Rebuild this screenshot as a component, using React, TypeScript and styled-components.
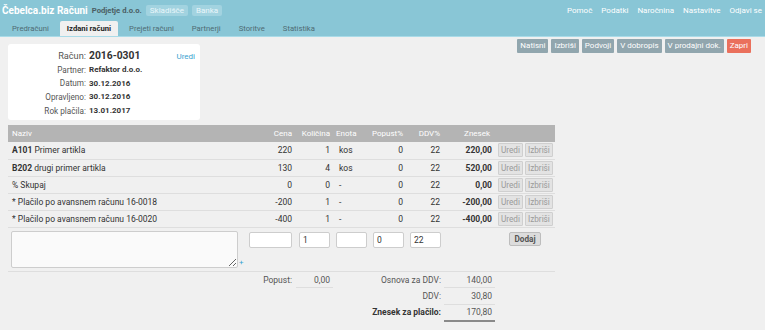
import React from 'react';
import styled, { createGlobalStyle } from 'styled-components';

const Global = createGlobalStyle`
  html, body { margin: 0; padding: 0; background: #f0f0f0; }
  body { font-family: Roboto, "Noto Sans", "Liberation Sans", sans-serif; font-size: 8px; color: #333; }
  * { box-sizing: border-box; }
`;

const Header = styled.header`
  background: #89c6d6;
  border-bottom: 1px solid #a9dbe8;
  height: 37px;
  display: flex;
  flex-direction: column;
`;
const TopBar = styled.div`
  display: flex;
  align-items: center;
  height: 21px;
  padding: 0 2px 0 2px;
`;
const Brand = styled.span`
  color: #fff;
  font-weight: 700;
  font-size: 10px;
  margin-right: 4px;
`;
const Company = styled.span`
  color: #4b5d63;
  font-weight: 700;
  font-size: 7.7px;
  margin-right: 4px;
`;
const Chip = styled.span`
  background: #a2d3e0;
  color: #e9f6fa;
  font-size: 8px;
  height: 11px;
  line-height: 11px;
  padding: 0 4px;
  border-radius: 2px;
  margin-right: 4px;
`;
const RightLinks = styled.nav`
  margin-left: auto;
  display: flex;
  gap: 9px;
  padding-right: 1px;
`;
const TopLink = styled.a`
  color: #fff;
  font-size: 8px;
  text-decoration: none;
`;
const Tabs = styled.nav`
  display: flex;
  height: 15px;
  padding-left: 5px;
  gap: 4px;
`;
const Tab = styled.a<{ $active?: boolean }>`
  display: flex;
  align-items: center;
  padding: 0 7px;
  font-size: 7.7px;
  text-decoration: none;
  color: ${p => (p.$active ? '#222' : '#4f6b73')};
  font-weight: ${p => (p.$active ? 700 : 400)};
  background: ${p => (p.$active ? '#f0f0f0' : 'transparent')};
  border-radius: 2px 2px 0 0;
`;

const Main = styled.main`
  padding: 2px 14px 0 8px;
`;
const TopArea = styled.div`
  display: flex;
  justify-content: space-between;
  align-items: flex-start;
`;
const Card = styled.section`
  margin-top: 5px;
  width: 192px;
  height: 76px;
  background: #fff;
  border-radius: 3px;
  display: flex;
  padding: 5px 5px 0 0;
`;
const InfoGrid = styled.div`
  display: grid;
  grid-template-columns: 78px auto;
  column-gap: 3px;
  align-items: center;
  grid-auto-rows: 13.7px;
`;
const Label = styled.span<{ $big?: boolean }>`
  text-align: right;
  color: #555;
  font-size: ${p => (p.$big ? '9.2px' : '8.2px')};
  white-space: nowrap;
`;
const Value = styled.span<{ $big?: boolean }>`
  font-weight: 700;
  color: #333;
  font-size: ${p => (p.$big ? '10.3px' : '8px')};
  white-space: nowrap;
`;
const EditLink = styled.a`
  margin-left: auto;
  color: #3aa2d0;
  font-size: 8px;
  margin-top: 3px;
`;
const Actions = styled.div`
  display: flex;
  gap: 3px;
`;
const ActionBtn = styled.button<{ $danger?: boolean }>`
  height: 14px;
  padding: 0 3px;
  border: none;
  border-radius: 1px;
  font-family: inherit;
  font-size: 8px;
  color: #fff;
  background: ${p => (p.$danger ? '#ea705c' : '#91a6ae')};
  line-height: 14px;
`;

const Table = styled.table`
  margin-top: 5px;
  width: 547px;
  table-layout: fixed;
  border-collapse: collapse;
`;
const Th = styled.th<{ $align?: string; $pl?: number; $pr?: number }>`
  background: #b4b4b4;
  color: #fff;
  font-weight: 400;
  font-size: 8px;
  height: 17px;
  padding: 0 ${p => p.$pr ?? 0}px 0 ${p => p.$pl ?? 0}px;
  text-align: ${p => p.$align ?? 'left'};
  white-space: nowrap;
`;
const Tr = styled.tr`
  border-bottom: 1px solid #dedede;
`;
const Td = styled.td<{ $align?: string; $pl?: number; $pr?: number; $bold?: boolean }>`
  height: 17px;
  padding: 0 ${p => p.$pr ?? 0}px 0 ${p => p.$pl ?? 0}px;
  text-align: ${p => p.$align ?? 'left'};
  font-weight: ${p => (p.$bold ? 700 : 400)};
  font-size: 8.5px;
  white-space: nowrap;
  color: #333;
`;
const RowBtns = styled.div`
  display: flex;
  gap: 2px;
  padding-left: 3px;
`;
const SmallBtn = styled.button`
  height: 14px;
  padding: 0 2px;
  border: 1px solid #cfcfcf;
  border-radius: 1px;
  background: #e3e3e3;
  color: #9a9a9a;
  font-family: inherit;
  font-size: 8.2px;
  line-height: 12px;
`;
const InputRow = styled.tr`
  border-bottom: 1px solid #dedede;
`;
const InTd = styled.td<{ $pl?: number }>`
  height: 44px;
  vertical-align: top;
  padding: 4px 0 0 ${p => p.$pl ?? 0}px;
`;
const NameCell = styled.div`
  display: flex;
  align-items: flex-end;
  padding: 3px 0 0 3px;
  margin-top: -4px;
`;
const Area = styled.textarea`
  width: 227px;
  height: 37px;
  border: 1px solid #cdcdcd;
  border-radius: 2px;
  background: #fafafa;
  resize: both;
  font-family: inherit;
`;
const Plus = styled.span`
  color: #3aa2d0;
  font-size: 8px;
  line-height: 8px;
  margin-left: 1px;
  margin-bottom: 1px;
`;
const Field = styled.input<{ $w: number }>`
  width: ${p => p.$w}px;
  height: 16px;
  border: 1px solid #cdcdcd;
  border-radius: 2px;
  background: #fff;
  font-family: inherit;
  font-size: 8.5px;
  color: #333;
  padding: 0 3px;
  display: block;
`;
const AddBtn = styled.button`
  display: block;
  margin: 0 auto;
  height: 14px;
  padding: 0 4px;
  border: 1px solid #bdbdbd;
  border-radius: 2px;
  background: #dcdcdc;
  color: #555;
  font-family: inherit;
  font-size: 8.2px;
  font-weight: 700;
  line-height: 12px;
`;
const SumTd = styled.td<{ $align?: string; $pr?: number; $bold?: boolean; $line?: 'thin' | 'thick' | 'none'; $pt?: number }>`
  height: 16.5px;
  padding: ${p => p.$pt ?? 0}px ${p => p.$pr ?? 0}px 0 0;
  text-align: ${p => p.$align ?? 'right'};
  font-weight: ${p => (p.$bold ? 700 : 400)};
  font-size: 8.5px;
  color: ${p => (p.$bold ? '#333' : '#555')};
  white-space: nowrap;
  border-bottom: ${p =>
    p.$line === 'thick' ? '2px solid #8a8a8a' : p.$line === 'thin' ? '1px solid #dedede' : 'none'};
`;

type Item = { code?: string; name: string; price: string; qty: string; unit: string; disc: string; vat: string; total: string };
const items: Item[] = [
  { code: 'A101', name: 'Primer artikla', price: '220', qty: '1', unit: 'kos', disc: '0', vat: '22', total: '220,00' },
  { code: 'B202', name: 'drugi primer artikla', price: '130', qty: '4', unit: 'kos', disc: '0', vat: '22', total: '520,00' },
  { name: '% Skupaj', price: '0', qty: '0', unit: '-', disc: '0', vat: '22', total: '0,00' },
  { name: '* Plačilo po avansnem računu 16-0018', price: '-200', qty: '1', unit: '-', disc: '0', vat: '22', total: '-200,00' },
  { name: '* Plačilo po avansnem računu 16-0020', price: '-400', qty: '1', unit: '-', disc: '0', vat: '22', total: '-400,00' },
];

export default function App() {
  return (
    <>
      <Global />
      <Header>
        <TopBar>
          <Brand>Čebelca.biz Računi</Brand>
          <Company>Podjetje d.o.o.</Company>
          <Chip>Skladišče</Chip>
          <Chip>Banka</Chip>
          <RightLinks>
            {['Pomoč', 'Podatki', 'Naročnina', 'Nastavitve', 'Odjavi se'].map(l => (
              <TopLink key={l}>{l}</TopLink>
            ))}
          </RightLinks>
        </TopBar>
        <Tabs>
          <Tab>Predračuni</Tab>
          <Tab $active>Izdani računi</Tab>
          <Tab>Prejeti računi</Tab>
          <Tab>Partnerji</Tab>
          <Tab>Storitve</Tab>
          <Tab>Statistika</Tab>
        </Tabs>
      </Header>
      <Main>
        <TopArea>
          <Card>
            <InfoGrid>
              <Label $big>Račun:</Label>
              <Value $big>2016-0301</Value>
              <Label>Partner:</Label>
              <Value>Refaktor d.o.o.</Value>
              <Label>Datum:</Label>
              <Value>30.12.2016</Value>
              <Label>Opravljeno:</Label>
              <Value>30.12.2016</Value>
              <Label>Rok plačila:</Label>
              <Value>13.01.2017</Value>
            </InfoGrid>
            <EditLink>Uredi</EditLink>
          </Card>
          <Actions>
            <ActionBtn>Natisni</ActionBtn>
            <ActionBtn>Izbriši</ActionBtn>
            <ActionBtn>Podvoji</ActionBtn>
            <ActionBtn>V dobropis</ActionBtn>
            <ActionBtn>V prodajni dok.</ActionBtn>
            <ActionBtn $danger>Zapri</ActionBtn>
          </Actions>
        </TopArea>
        <Table>
          <colgroup>
            <col style={{ width: 237 }} />
            <col style={{ width: 51 }} />
            <col style={{ width: 37 }} />
            <col style={{ width: 37 }} />
            <col style={{ width: 37 }} />
            <col style={{ width: 37 }} />
            <col style={{ width: 51 }} />
            <col style={{ width: 60 }} />
          </colgroup>
          <thead>
            <tr>
              <Th $pl={4}>Naziv</Th>
              <Th $align="right" $pr={4}>Cena</Th>
              <Th $align="right" $pr={3}>Količina</Th>
              <Th $pl={3}>Enota</Th>
              <Th $align="right" $pr={4}>Popust%</Th>
              <Th $align="right" $pr={4}>DDV%</Th>
              <Th $align="right" $pr={5}>Znesek</Th>
              <Th />
            </tr>
          </thead>
          <tbody>
            {items.map((it, i) => (
              <Tr key={i}>
                <Td $pl={4}>
                  {it.code && <b>{it.code} </b>}
                  {it.name}
                </Td>
                <Td $align="right" $pr={4}>{it.price}</Td>
                <Td $align="right" $pr={3}>{it.qty}</Td>
                <Td $pl={6}>{it.unit}</Td>
                <Td $align="right" $pr={4}>{it.disc}</Td>
                <Td $align="right" $pr={4}>{it.vat}</Td>
                <Td $align="right" $pr={3} $bold>{it.total}</Td>
                <Td>
                  <RowBtns>
                    <SmallBtn>Uredi</SmallBtn>
                    <SmallBtn>Izbriši</SmallBtn>
                  </RowBtns>
                </Td>
              </Tr>
            ))}
            <InputRow>
              <InTd>
                <NameCell>
                  <Area />
                  <Plus>+</Plus>
                </NameCell>
              </InTd>
              <InTd $pl={4}><Field $w={43} /></InTd>
              <InTd $pl={3}><Field $w={31} defaultValue="1" /></InTd>
              <InTd $pl={3}><Field $w={31} /></InTd>
              <InTd $pl={3}><Field $w={31} defaultValue="0" /></InTd>
              <InTd $pl={3}><Field $w={31} defaultValue="22" /></InTd>
              <InTd />
              <InTd><AddBtn>Dodaj</AddBtn></InTd>
            </InputRow>
          </tbody>
          <tbody>
            <tr>
              <SumTd $line="none" $pt={1} />
              <SumTd $pr={4} $pt={1}>Popust:</SumTd>
              <SumTd $pr={3} $pt={1} $line="thin">0,00</SumTd>
              <SumTd />
              <SumTd colSpan={2} $pr={3} $pt={1}>Osnova za DDV:</SumTd>
              <SumTd $pr={3} $pt={1} $line="thin">140,00</SumTd>
              <SumTd />
            </tr>
            <tr>
              <SumTd colSpan={4} />
              <SumTd colSpan={2} $pr={3}>DDV:</SumTd>
              <SumTd $pr={3} $line="thin">30,80</SumTd>
              <SumTd />
            </tr>
            <tr>
              <SumTd colSpan={4} />
              <SumTd colSpan={2} $pr={3} $bold>Znesek za plačilo:</SumTd>
              <SumTd $pr={3} $line="thick">170,80</SumTd>
              <SumTd />
            </tr>
          </tbody>
        </Table>
      </Main>
    </>
  );
}
